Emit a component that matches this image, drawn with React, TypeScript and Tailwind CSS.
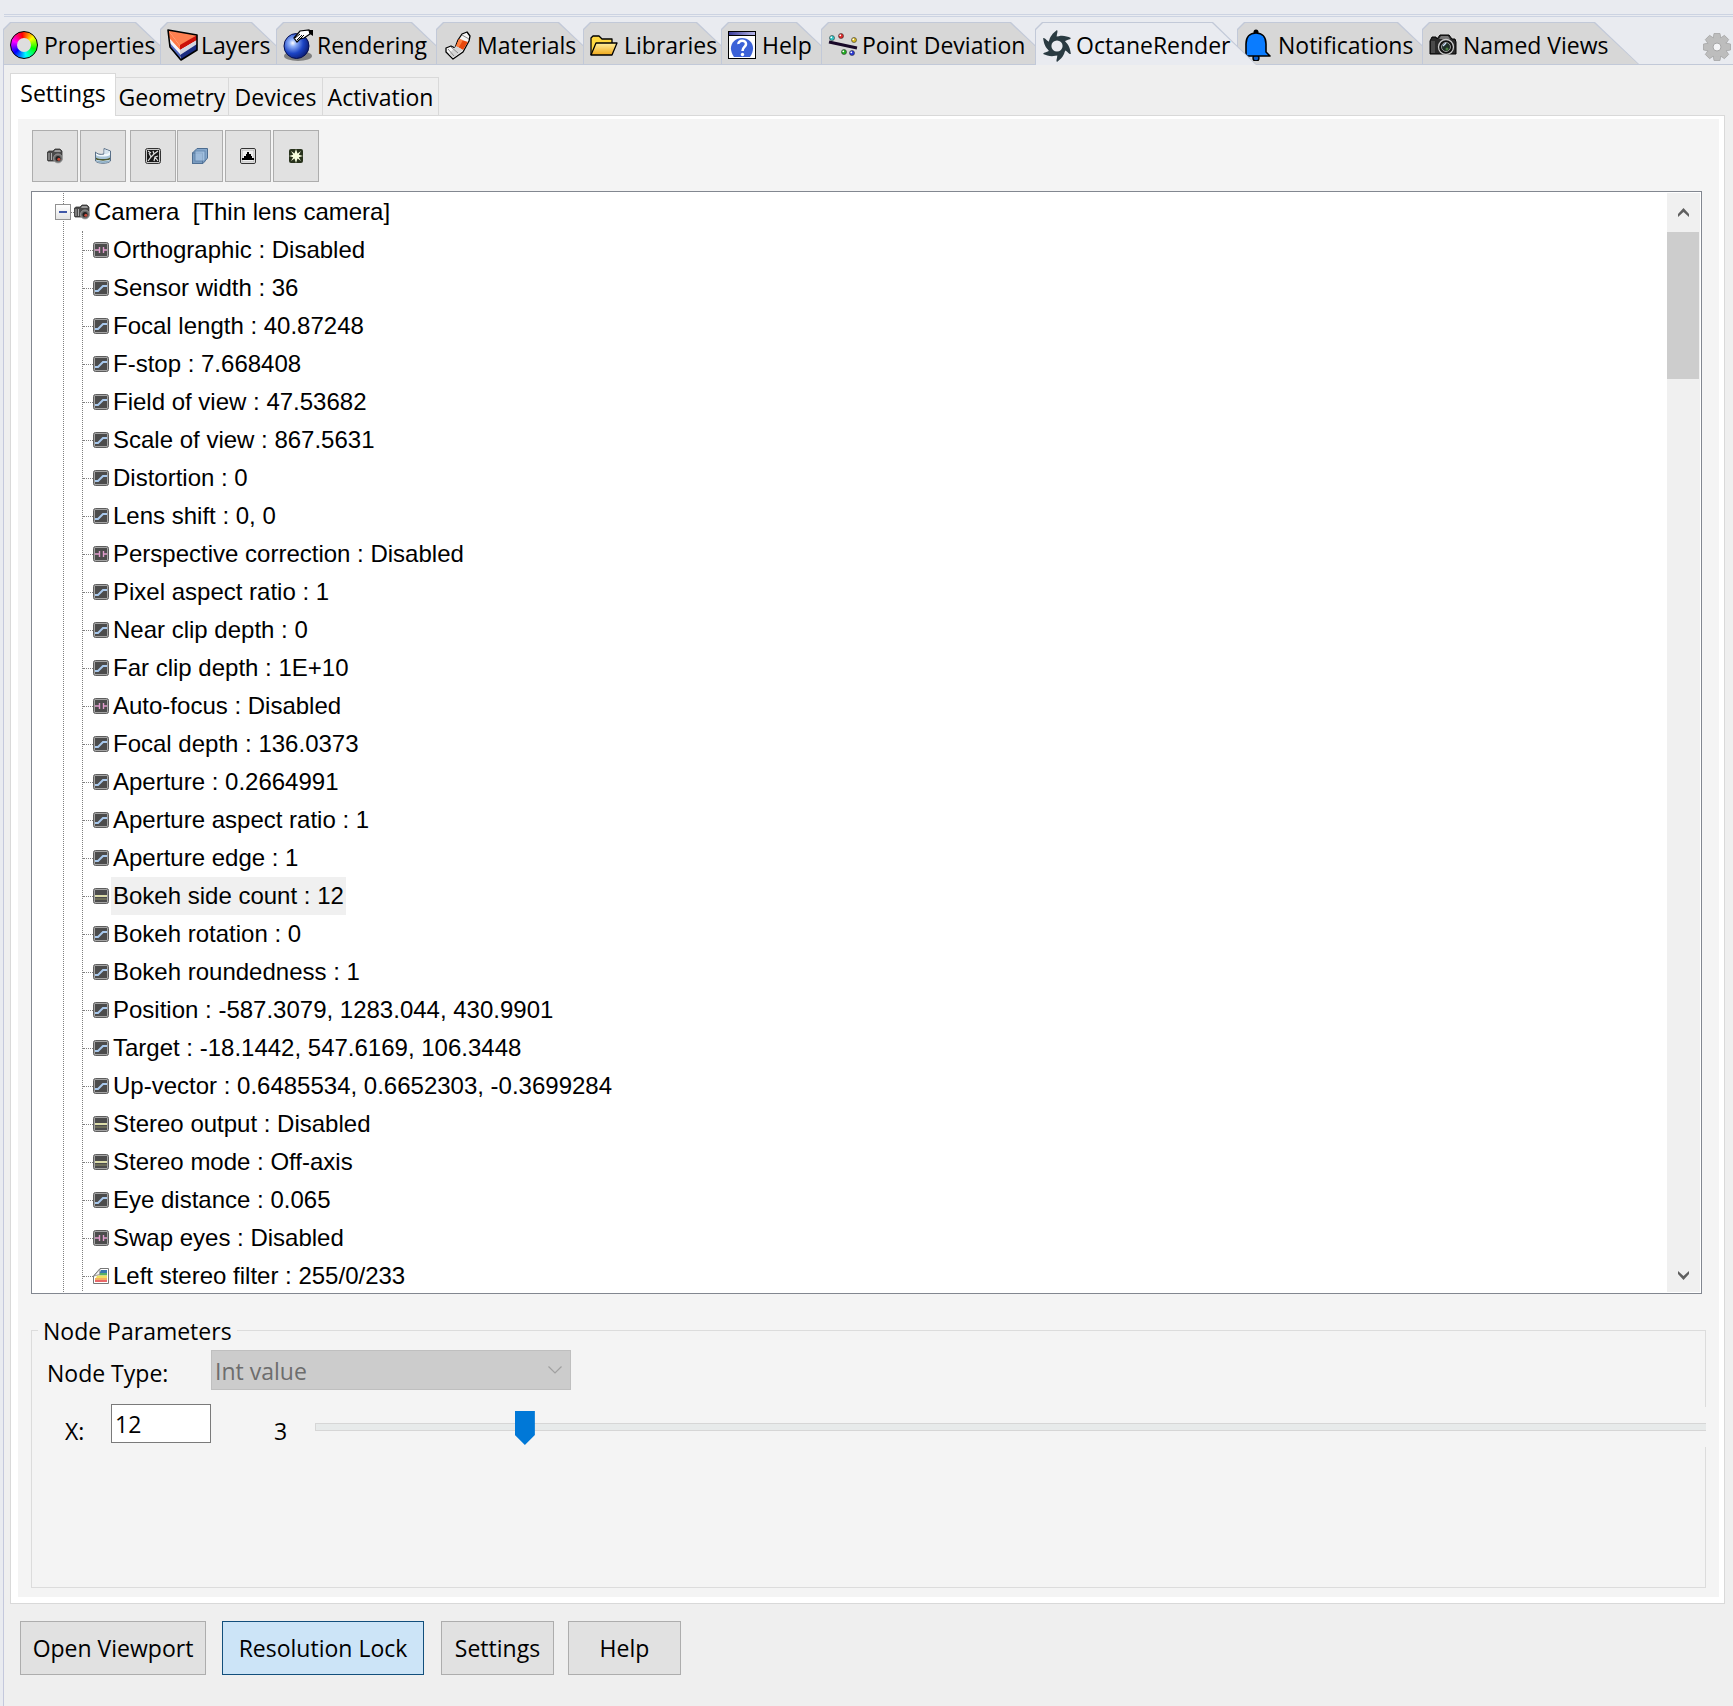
import { useState, type ReactNode } from "react";
import clsx from "clsx";

function ColorWheelIcon() {
  return (
    <span className="block h-7 w-7 rounded-full border border-black bg-[conic-gradient(from_-10deg,#ff0000,#ffff00,#00ff00,#00ffff,#0000ff,#ff00ff,#ff0000)] p-[6px]">
      <span className="block h-full w-full rounded-full bg-[#dedede]" />
    </span>
  );
}

function LayersIcon() {
  return (
    <svg viewBox="0 0 31 33" className="h-[33px] w-[31px]">
      <path d="M1 1 30 6V21L14 31 3 18Z" fill="#fff" />
      <path d="M1 1 30 6 13 17Z" fill="#ff8050" />
      <path d="M1 1 13 17V21L2 9Z" fill="#ff7a48" />
      <path d="M13 16 30 6V11L13 21Z" fill="#cc1008" />
      <path d="M2 9 13 21V25L2 13Z" fill="#f4f4fa" />
      <path d="M13 21 30 11V15L13 26Z" fill="#d4d6e0" />
      <path d="M2 13 13 25V31L3 18Z" fill="#5068c0" />
      <path d="M13 26 30 15V21L14 31Z" fill="#1a2c80" />
      <path d="M1 1 30 6V21L14 31 3 18Z" fill="none" stroke="#000" strokeWidth="1.600" strokeLinejoin="round" />
    </svg>
  );
}

function RenderingIcon() {
  return (
    <svg viewBox="0 0 31 33" className="h-[33px] w-[31px]">
      <defs>
        <radialGradient id="ball" cx="0.35" cy="0.38" r="0.7">
          <stop offset="0" stopColor="#fff" />
          <stop offset="0.2" stopColor="#8fb0f8" />
          <stop offset="0.6" stopColor="#1c44c4" />
          <stop offset="1" stopColor="#0a1a70" />
        </radialGradient>
      </defs>
      <ellipse cx="15" cy="27" rx="14" ry="5" fill="#808080" />
      <circle cx="13.500" cy="17" r="12.500" fill="url(#ball)" stroke="#061050" />
      <path d="M11 9 17 2 26 1 27 5 21 9 17 10 14 13Z" fill="#fff" stroke="#000" strokeWidth="1.200" />
      <path d="M12 9 17 5M14 11 19 6M17 10 21 6" stroke="#000" fill="none" />
      <path d="M26 1H30V7L27 5Z" fill="#000" />
    </svg>
  );
}

function MaterialsIcon() {
  return (
    <svg viewBox="0 0 26 29" className="ml-0.5 h-[29px] w-[26px]">
      <path d="M17 3 22 1 25 5 24 10 18 21 8 28 1 21V17L6 15 10 17 13 9Z" fill="#f6f6f6" stroke="#000" strokeWidth="1.300" strokeLinejoin="round" />
      <path d="M14 8 23 11 18 19 11 15Z" fill="#e8480c" />
      <path d="M14 8 18 9 14 16 11 15Z" fill="#ff8040" />
      <path d="M11 15 18 19 8 27 4 23Z" fill="#d4d4d4" />
      <path d="M3 18 9 25M6 16 13 22M17 4 24 8" stroke="#888" fill="none" />
    </svg>
  );
}

function FolderIcon() {
  return (
    <svg viewBox="0 0 28 21" className="h-[21px] w-7">
      <defs>
        <linearGradient id="folder" x2="0" y2="1">
          <stop offset="0" stopColor="#fff0a0" />
          <stop offset="1" stopColor="#f0a818" />
        </linearGradient>
      </defs>
      <path d="M1 20V3L3 1H9L12 4H22V8" fill="#ffd840" stroke="#000" strokeWidth="1.300" strokeLinejoin="round" />
      <path d="M1 20 6 8H27L22 20Z" fill="url(#folder)" stroke="#000" strokeWidth="1.300" strokeLinejoin="round" />
    </svg>
  );
}

function HelpIcon() {
  return (
    <svg viewBox="0 0 28 28" className="h-7 w-7">
      <defs>
        <linearGradient id="help-bar">
          <stop offset="0" stopColor="#3a3c98" />
          <stop offset="1" stopColor="#b8b8e8" />
        </linearGradient>
      </defs>
      <rect x="0.500" y="0.500" width="27" height="27" fill="#fff" stroke="#000" />
      <rect x="1" y="1" width="26" height="3" fill="url(#help-bar)" />
      <path d="M1 4.500H27" stroke="#000" />
      <path d="M6 26C-1 16 5 7 14 7S29 16 22 26Z" fill="#3c62d8" />
      <path d="M10.500 13C10 9 18 8.500 18 13 18 16 14.500 16 14.500 20" fill="none" stroke="#fff" strokeWidth="2.600" />
      <circle cx="14.500" cy="23.500" r="1.700" fill="#fff" />
    </svg>
  );
}

function PointDeviationIcon() {
  const dots = [
    { x: 4, y: 5, fill: "#30c8c8" },
    { x: 13, y: 3, fill: "#e02828" },
    { x: 26, y: 7, fill: "#d8b820" },
    { x: 16, y: 19, fill: "#20b020" },
    { x: 24, y: 20, fill: "#2838d8" },
  ];
  return (
    <svg viewBox="0 0 30 24" className="h-6 w-[30px]">
      <path d="M1 9 29 15" stroke="#180828" strokeWidth="3" />
      {dots.map((dot) => (
        <g key={dot.fill}>
          <circle cx={dot.x} cy={dot.y} r="2.500" fill={dot.fill} stroke="#333" strokeWidth="0.600" />
          <circle cx={dot.x - 0.7} cy={dot.y - 0.7} r="0.900" fill="#fff" />
        </g>
      ))}
    </svg>
  );
}

function OctaneIcon() {
  return (
    <svg viewBox="-15 -16 30 32" className="h-8 w-[30px]">
      <circle r="7.500" fill="none" stroke="#2a3b42" strokeWidth="3.800" />
      {[0, 60, 120, 180, 240, 300].map((angle) => (
        <path key={angle} transform={`rotate(${angle})`} d="M-8 -3C-8 -9 -4 -13 0 -16 1.500 -14 -1 -12 0 -7Z" fill="#2a3b42" />
      ))}
    </svg>
  );
}

function BellIcon() {
  return (
    <svg viewBox="0 0 28 32" className="h-8 w-7">
      <circle cx="12" cy="29" r="3" fill="#0a5cc8" stroke="#000" strokeWidth="1.400" />
      <circle cx="12" cy="3" r="2.500" fill="#000" />
      <path d="M2 27V15C2 8 6 4 12 4S22 8 22 15V23L26 27Z" fill="#0a7cff" stroke="#000" strokeWidth="1.600" strokeLinejoin="round" />
    </svg>
  );
}

function NamedViewsIcon() {
  return (
    <svg viewBox="0 0 28 22" className="h-[22px] w-7">
      <path d="M1 7 3 3H7L8 5 11 1H20L23 5H26L27 8V20H1Z" fill="#2a2a2a" stroke="#000" strokeLinejoin="round" />
      <path d="M12 2H19L21 5H10Z" fill="#777" />
      <rect x="2" y="7" width="4" height="12" fill="#4a4a4a" />
      <circle cx="17" cy="13" r="7.500" fill="#111" stroke="#c8c8c8" strokeWidth="1.300" />
      <circle cx="17" cy="13" r="4.500" fill="#203028" stroke="#999" />
      <path d="M14 12 17 9" stroke="#d0e0ff" strokeWidth="1.500" />
      <circle cx="18" cy="15" r="1.500" fill="#4a8040" />
    </svg>
  );
}

function GearIcon() {
  return (
    <svg viewBox="-14 -14 28 28" className="h-7 w-7">
      {[0, 45, 90, 135].map((angle) => (
        <path key={angle} transform={`rotate(${angle})`} d="M-3 -13.500H3L4 -8V8L3 13.500H-3L-4 8V-8Z" fill="#bdbdbd" stroke="#a6a6a6" strokeWidth="0.800" />
      ))}
      <circle r="9.500" fill="#bdbdbd" />
      <circle r="4" fill="#f4f4f6" stroke="#a6a6a6" />
    </svg>
  );
}

function SmallCameraIcon() {
  return (
    <svg viewBox="0 0 16 16" className="h-4 w-4 shrink-0">
      <path d="M0.500 4 2 3H6L8 1H13L15 3V12L12 13H1L0.500 12Z" fill="#4a4a4a" stroke="#333" strokeWidth="0.800" />
      <path d="M8 2H13L14 4H7Z" fill="#9a9a9a" />
      <path d="M2 5V12M4.500 5V12" stroke="#b0b0b0" />
      <circle cx="11" cy="10.500" r="4.500" fill="#686868" stroke="#a8a8a8" strokeWidth="0.800" />
      <circle cx="11" cy="10.500" r="2.500" fill="#202020" />
      <circle cx="11.800" cy="11.300" r="1.500" fill="#c84838" />
    </svg>
  );
}

function EnvironmentIcon() {
  return (
    <svg viewBox="0 0 16 16" className="h-4 w-4">
      <path d="M0.500 4V13C3 16 13 16 15.500 13V3L9 0.500V6C5 7 2 6 0.500 4Z" fill="#f2f8fc" stroke="#5a7088" />
      <path d="M9.500 1.500 15 3.500C14 5.500 12 6 9.500 6Z" fill="#d4e2ec" />
      <path d="M1 7C4 9 12 9 15 7V9.500C12 11.500 4 11.500 1 9.500Z" fill="#a8c4d8" />
      <path d="M1 9.500C4 11.500 12 11.500 15 9.500V11.500C12 13 4 13 1 11.500Z" fill="#4a5830" />
      <path d="M1 12C4 13.500 12 13.500 15 12V13C12 15.500 4 15.500 1 13Z" fill="#8fb0c8" />
    </svg>
  );
}

function ImagerIcon() {
  return (
    <svg viewBox="0 0 16 16" className="h-4 w-4">
      <rect x="0.500" y="0.500" width="15" height="15" rx="2" fill="#c8c8c8" stroke="#333" />
      <rect x="2" y="2" width="12" height="12" fill="#181818" />
      <path d="M3 13 6 9 4 5M6 9 9 6 13 3M9 6 8 3M9 13 10 9 13 8M10 9 13 13M3 3 6 5" fill="none" stroke="#e0e0e0" strokeWidth="1.200" />
    </svg>
  );
}

function KernelIcon() {
  return (
    <svg viewBox="0 0 16 16" className="h-4 w-4">
      <path d="M0.500 5 5 0.500H15.500V10L11 15.500H0.500Z" fill="#86a8cc" stroke="#4c6c90" />
      <rect x="0.500" y="5" width="10" height="10.500" fill="#7a9cc0" stroke="#4c6c90" strokeWidth="0.800" />
      <rect x="3" y="3" width="10" height="10" fill="#b4d0ec" fillOpacity="0.600" stroke="#5c80a8" strokeWidth="0.800" />
    </svg>
  );
}

function FilmIcon() {
  return (
    <svg viewBox="0 0 16 16" className="h-4 w-4">
      <rect x="0.500" y="0.500" width="15" height="15" rx="1.500" fill="#fff" stroke="#333" />
      <rect x="2" y="2" width="12" height="12" fill="#f0f0f0" stroke="#999" strokeWidth="0.700" />
      <path d="M2 12V10H4V8H6V6H7V4H9V6H11V8H12V10H14V12Z" fill="#000" />
    </svg>
  );
}

function PostIcon() {
  return (
    <svg viewBox="0 0 16 16" className="h-4 w-4">
      <rect x="1" y="1" width="14" height="14" rx="2" fill="#28321c" />
      <path d="M8 1 9.500 5.500 13 3 10.800 6.700 15 8 10.800 9.300 13 13 9.500 10.500 8 15 6.500 10.500 3 13 5.200 9.300 1 8 5.200 6.700 3 3 6.500 5.500Z" fill="#f8ffe0" />
    </svg>
  );
}

type NodeKind = "bool" | "float" | "int" | "color";

function NodeIcon({ kind }: { kind: NodeKind }) {
  if (kind === "color") {
    return (
      <svg viewBox="0 0 16 16" className="h-4 w-4 shrink-0">
        <path d="M0.500 15.500V8L7 0.500H15.500V15.500Z" fill="#fff" stroke="#777" />
        <path d="M8 2H14V5H6.500Z" fill="#3878b0" />
        <path d="M7 5H14V7.500H6Z" fill="#58b068" />
        <path d="M4 7.500H14V10H3Z" fill="#f0e060" />
        <path d="M2 10H14V12H2Z" fill="#f4b060" />
        <path d="M2 12H14V14H2Z" fill="#e86868" />
        <path d="M1 8 7 1 6.500 6.500Z" fill="#f6f6f6" stroke="#777" strokeWidth="0.700" />
      </svg>
    );
  }
  return (
    <svg viewBox="0 0 16 16" className="h-4 w-4 shrink-0">
      <rect x="0.500" y="0.500" width="15" height="15" rx="2" fill="#a4a4a4" stroke="#5e5e5e" />
      <rect x="2" y="2" width="12" height="12" fill="#4c4c4c" />
      {kind === "float" && <path d="M2 11H5L10 6H14" fill="none" stroke="#a8c8ec" strokeWidth="2" />}
      {kind === "bool" && <path d="M2 8H6M6.500 5V11M10.500 5V11M11 8H14" fill="none" stroke="#e09ccc" strokeWidth="1.400" />}
      {kind === "int" && (
        <>
          <path d="M2 8H14" stroke="#dcdca8" strokeWidth="2" />
          <path d="M2 11H14" stroke="#6c6c58" strokeWidth="2" />
        </>
      )}
    </svg>
  );
}

const PANEL_TABS: { label: string; icon: ReactNode; width: string }[] = [
  { label: "Properties", icon: <ColorWheelIcon />, width: "w-[177px]" },
  { label: "Layers", icon: <LayersIcon />, width: "w-[136px]" },
  { label: "Rendering", icon: <RenderingIcon />, width: "w-[180px]" },
  { label: "Materials", icon: <MaterialsIcon />, width: "w-[167px]" },
  { label: "Libraries", icon: <FolderIcon />, width: "w-[158px]" },
  { label: "Help", icon: <HelpIcon />, width: "w-[120px]" },
  { label: "Point Deviation", icon: <PointDeviationIcon />, width: "w-[234px]" },
  { label: "OctaneRender", icon: <OctaneIcon />, width: "w-[222px]" },
  { label: "Notifications", icon: <BellIcon />, width: "w-[205px]" },
  { label: "Named Views", icon: <NamedViewsIcon />, width: "w-[217px]" },
];

const SUB_TABS = [
  { label: "Geometry", width: "w-[113px]" },
  { label: "Devices", width: "w-[94px]" },
  { label: "Activation", width: "w-[116px]" },
];

const TOOLS = [
  { label: "Camera", icon: <SmallCameraIcon />, gap: "" },
  { label: "Environment", icon: <EnvironmentIcon />, gap: "ml-0.5" },
  { label: "Imager", icon: <ImagerIcon />, gap: "ml-1" },
  { label: "Kernel", icon: <KernelIcon />, gap: "ml-px" },
  { label: "Film settings", icon: <FilmIcon />, gap: "ml-0.5" },
  { label: "Post processing", icon: <PostIcon />, gap: "ml-0.5" },
];

const NODES: { text: string; kind: NodeKind }[] = [
  { text: "Orthographic : Disabled", kind: "bool" },
  { text: "Sensor width : 36", kind: "float" },
  { text: "Focal length : 40.87248", kind: "float" },
  { text: "F-stop : 7.668408", kind: "float" },
  { text: "Field of view : 47.53682", kind: "float" },
  { text: "Scale of view : 867.5631", kind: "float" },
  { text: "Distortion : 0", kind: "float" },
  { text: "Lens shift : 0, 0", kind: "float" },
  { text: "Perspective correction : Disabled", kind: "bool" },
  { text: "Pixel aspect ratio : 1", kind: "float" },
  { text: "Near clip depth : 0", kind: "float" },
  { text: "Far clip depth : 1E+10", kind: "float" },
  { text: "Auto-focus : Disabled", kind: "bool" },
  { text: "Focal depth : 136.0373", kind: "float" },
  { text: "Aperture : 0.2664991", kind: "float" },
  { text: "Aperture aspect ratio : 1", kind: "float" },
  { text: "Aperture edge : 1", kind: "float" },
  { text: "Bokeh side count : 12", kind: "int" },
  { text: "Bokeh rotation : 0", kind: "float" },
  { text: "Bokeh roundedness : 1", kind: "float" },
  { text: "Position : -587.3079, 1283.044, 430.9901", kind: "float" },
  { text: "Target : -18.1442, 547.6169, 106.3448", kind: "float" },
  { text: "Up-vector : 0.6485534, 0.6652303, -0.3699284", kind: "float" },
  { text: "Stereo output : Disabled", kind: "int" },
  { text: "Stereo mode : Off-axis", kind: "int" },
  { text: "Eye distance : 0.065", kind: "float" },
  { text: "Swap eyes : Disabled", kind: "bool" },
  { text: "Left stereo filter : 255/0/233", kind: "color" },
];

function PanelTabs() {
  const [active, setActive] = useState("OctaneRender");

  return (
    <nav className="flex h-[43px] items-start border-b border-[#c2c9d8] pr-0.5">
      {PANEL_TABS.map((tab) => {
        const isActive = tab.label === active;
        return (
          <button
            key={tab.label}
            onClick={() => setActive(tab.label)}
            className={clsx(
              "relative -mr-5 shrink-0 bg-[#c2c9d8] pt-px pl-px [clip-path:polygon(0_7px,7px_0,calc(100%-44px)_0,100%_100%,0_100%)]",
              tab.width,
              isActive ? "z-10 h-[43px]" : "h-[42px]",
            )}
          >
            <span
              className={clsx(
                "flex h-full items-center pt-[3px] pl-[6px] whitespace-nowrap [clip-path:polygon(0_7px,7px_0,calc(100%-45px)_0,calc(100%-1px)_100%,0_100%)]",
                isActive ? "bg-[#e9ebf0]" : "bg-[#d7d7d7]",
              )}
            >
              <span className="flex w-[34px] items-center">{tab.icon}</span>
              {tab.label}
            </span>
          </button>
        );
      })}
      <button aria-label="Panel options" className="mt-[11px] ml-auto">
        <GearIcon />
      </button>
    </nav>
  );
}

function NodeTree() {
  const [selected, setSelected] = useState("Bokeh side count : 12");

  return (
    <div className="mt-[9px] mr-1 flex min-h-0 flex-1 border border-[#828790] bg-white p-px font-['Liberation_Sans',Arial,sans-serif] text-[24px] leading-[38px]">
      <div className="ml-[30px] min-w-0 flex-1 border-l border-dotted border-[#808080]">
        <div className="flex h-full flex-col overflow-y-clip">
          <div className="-ml-[9px] flex h-[38px] shrink-0 items-center whitespace-pre">
            <button
              aria-label="Collapse Camera"
              className="flex h-4 w-4 items-center justify-center border border-[#919191] bg-linear-to-b from-white to-[#e4e4e4]"
            >
              <span className="h-0.5 w-2 bg-[#4058a8]" />
            </button>
            <span className="w-[3px] border-t border-dotted border-[#808080]" />
            <SmallCameraIcon />
            <span className="ml-0.5 px-0.5">{"Camera  [Thin lens camera]"}</span>
          </div>
          <ul className="ml-[18px] border-l border-dotted border-[#808080]">
            {NODES.map((node) => (
              <li key={node.text} className="flex h-[38px] items-center whitespace-nowrap">
                <span className="w-[10px] shrink-0 border-t border-dotted border-[#808080]" />
                <NodeIcon kind={node.kind} />
                <button
                  onClick={() => setSelected(node.text)}
                  className={clsx("ml-0.5 px-0.5", node.text === selected && "bg-[#f0f0f0]")}
                >
                  {node.text}
                </button>
              </li>
            ))}
          </ul>
        </div>
      </div>
      <div className="flex w-[33px] flex-col bg-[#f0f0f0] pr-px">
        <button aria-label="Scroll up" className="flex h-[39px] items-center justify-center">
          <svg viewBox="0 0 11 9" className="h-[9px] w-[11px]">
            <path d="M0 6 5.500 0 11 6V9L5.500 4 0 9Z" fill="#606060" />
          </svg>
        </button>
        <div className="h-[147px] bg-[#cdcdcd]" />
        <button aria-label="Scroll down" className="mt-auto flex h-[34px] items-center justify-center">
          <svg viewBox="0 0 11 9" className="h-[9px] w-[11px]">
            <path d="M0 3 5.500 9 11 3V0L5.500 5 0 0Z" fill="#606060" />
          </svg>
        </button>
      </div>
    </div>
  );
}

function NodeParameters() {
  const [value, setValue] = useState(12);

  return (
    <fieldset className="mt-6 h-[270px] min-w-0 shrink-0 border border-[#dcdcdc]">
      <legend className="ml-[6px] h-6 px-[5px] leading-[26px]">Node Parameters</legend>
      <div className="mt-2 flex h-10 pl-[15px]">
        <label htmlFor="node-type" className="w-[164px] pt-[7px] leading-8">
          Node Type:
        </label>
        <div className="grid w-[360px]">
          <select
            id="node-type"
            disabled
            className="col-start-1 row-start-1 appearance-none border border-[#bfbfbf] bg-[#cccccc] pt-0.5 pl-[3px] text-[#6d6d6d] opacity-100"
          >
            <option>Int value</option>
          </select>
          <svg viewBox="0 0 14 8" className="col-start-1 row-start-1 mr-[9px] h-2 w-[14px] self-center justify-self-end">
            <path d="M0.500 0.500 7 7 13.500 0.500" fill="none" stroke="#a0a0a0" strokeWidth="1.200" />
          </svg>
        </div>
      </div>
      <div className="mt-[14px] -mr-px flex items-start pl-[33px]">
        <label htmlFor="x-value" className="w-[46px] pt-[11px] leading-8">
          X:
        </label>
        <input
          id="x-value"
          type="text"
          value={value}
          onChange={(e) => setValue(Number(e.target.value) || 0)}
          className="h-[39px] w-[100px] border border-[#7a7a7a] bg-white pl-[3px]"
        />
        <label htmlFor="x-slider" className="ml-[63px] w-[41px] pt-[11px] leading-8">
          3
        </label>
        <div className="mt-[3px] flex h-10 flex-1 items-center bg-[#f4f4f4]">
          <input
            id="x-slider"
            type="range"
            min={3}
            max={65}
            value={value}
            onChange={(e) => setValue(Number(e.target.value))}
            className="h-9 w-full appearance-none bg-transparent [&::-webkit-slider-runnable-track]:h-2 [&::-webkit-slider-runnable-track]:border [&::-webkit-slider-runnable-track]:border-r-0 [&::-webkit-slider-runnable-track]:border-[#d6d6d6] [&::-webkit-slider-runnable-track]:bg-[#e7eaea] [&::-webkit-slider-thumb]:-mt-[13px] [&::-webkit-slider-thumb]:h-[34px] [&::-webkit-slider-thumb]:w-5 [&::-webkit-slider-thumb]:appearance-none [&::-webkit-slider-thumb]:bg-[#0078d7] [&::-webkit-slider-thumb]:[clip-path:polygon(0_0,100%_0,100%_24px,50%_100%,0_24px)]"
          />
        </div>
      </div>
    </fieldset>
  );
}

export default function App() {
  return (
    <div className="flex h-screen min-h-[900px] flex-col overflow-hidden bg-[#e9ebf0] pl-[3px] font-['Open_Sans','Segoe_UI',sans-serif] text-[23px] text-black">
      <div className="mt-[14px] mb-[5px] ml-px h-[3px] shrink-0 border-y border-[#ccd3e2]" />
      <PanelTabs />

      <main className="flex min-h-0 flex-1 flex-col border-l border-[#c4c8dc] bg-[#efefef] pt-2 pr-2 pl-[6px]">
        <div className="flex h-[42px] shrink-0 items-end">
          <button className="z-10 -mb-px h-[43px] w-[106px] border border-b-0 border-[#d9d9d9] bg-white pb-[3px]">
            Settings
          </button>
          {SUB_TABS.map((tab) => (
            <button
              key={tab.label}
              className={clsx("h-[38px] border border-b-0 border-l-0 border-[#d9d9d9] pt-0.5 whitespace-nowrap", tab.width)}
            >
              {tab.label}
            </button>
          ))}
        </div>

        <section className="flex min-h-0 flex-1 flex-col border border-[#d9d9d9] bg-white pt-[3px] pr-[5px] pb-[6px] pl-[7px]">
          <div className="flex min-h-0 flex-1 flex-col bg-[#f4f4f4] pt-[11px] pr-[13px] pb-[9px] pl-[13px]">
            <div className="ml-px flex shrink-0">
              {TOOLS.map((tool) => (
                <button
                  key={tool.label}
                  aria-label={tool.label}
                  className={clsx("flex h-[52px] w-[46px] items-center justify-center border border-[#adadad] bg-[#e1e1e1]", tool.gap)}
                >
                  {tool.icon}
                </button>
              ))}
            </div>
            <NodeTree />
            <NodeParameters />
          </div>
        </section>

        <footer className="flex shrink-0 pt-[17px] pb-[31px] pl-[10px]">
          <button className="h-[54px] w-[186px] border border-[#adadad] bg-[#e1e1e1]">Open Viewport</button>
          <button aria-pressed="true" className="ml-4 h-[54px] w-[202px] border border-[#124f7c] bg-[#cce4f7]">
            Resolution Lock
          </button>
          <button className="ml-[17px] h-[54px] w-[113px] border border-[#adadad] bg-[#e1e1e1]">Settings</button>
          <button className="ml-[14px] h-[54px] w-[113px] border border-[#adadad] bg-[#e1e1e1]">Help</button>
        </footer>
      </main>
    </div>
  );
}
